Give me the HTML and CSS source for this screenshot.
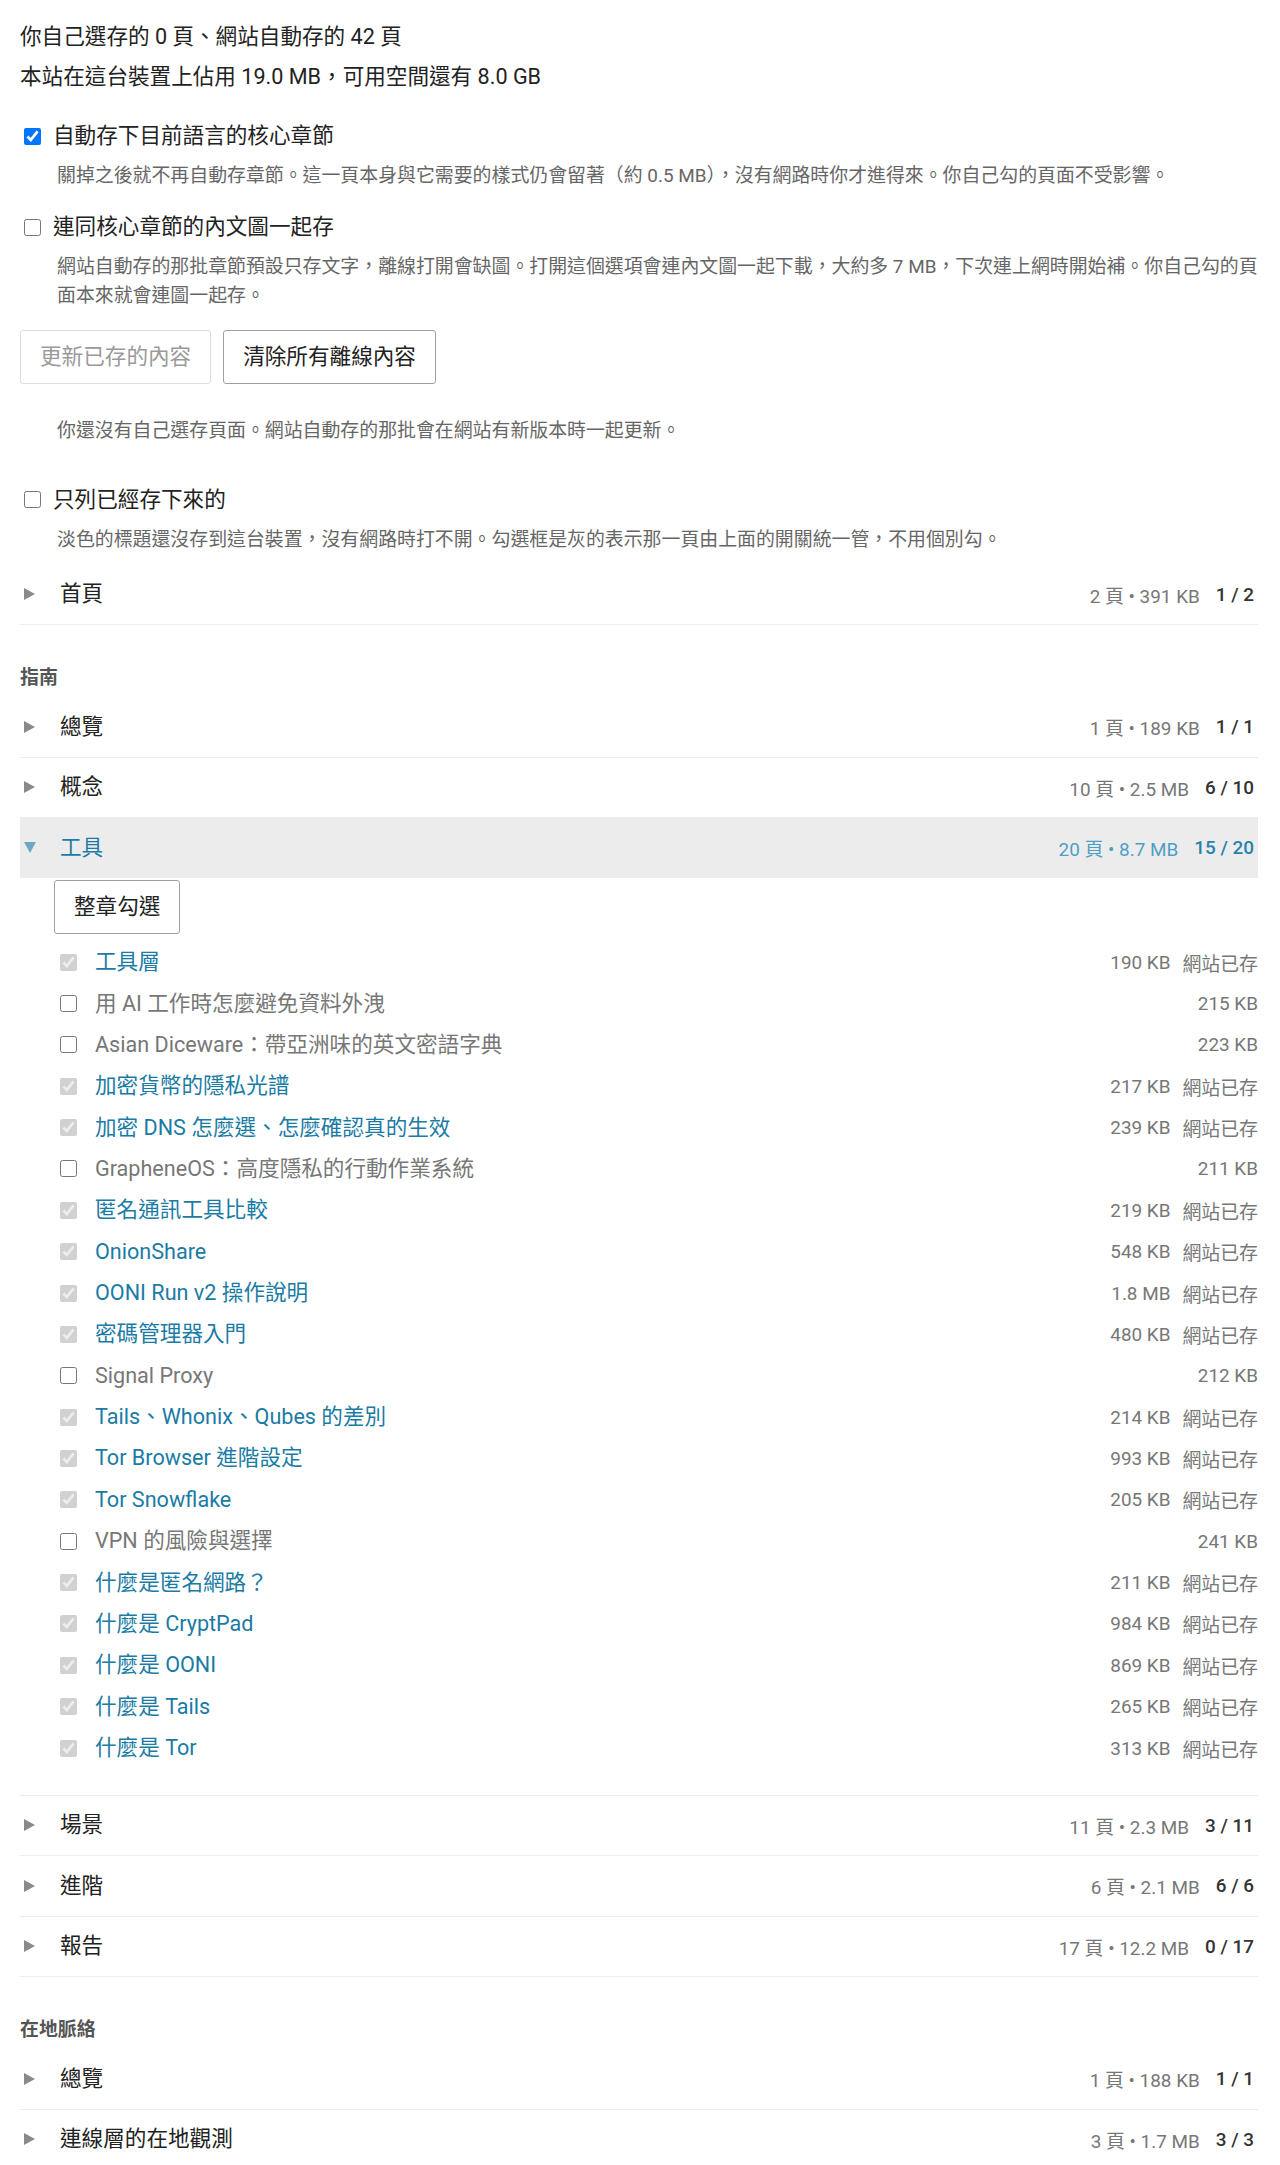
FILE: index.html
```html
<!DOCTYPE html>
<html lang="zh-Hant">
<head>
<meta charset="utf-8">
<title>離線內容</title>
<link rel="stylesheet" href="styles.css">
</head>
<body>
<main class="page">
  <p class="stat">你自己選存的 0 頁、網站自動存的 42 頁</p>
  <p class="stat">本站在這台裝置上佔用 19.0 MB，可用空間還有 8.0 GB</p>

  <div class="opt opt-first">
    <label class="opt-label"><input type="checkbox" checked><span>自動存下目前語言的核心章節</span></label>
    <p class="opt-desc">關掉之後就不再自動存章節。這一頁本身與它需要的樣式仍會留著（約 0.5 MB），沒有網路時你才進得來。你自己勾的頁面不受影響。</p>
  </div>

  <div class="opt">
    <label class="opt-label"><input type="checkbox"><span>連同核心章節的內文圖一起存</span></label>
    <p class="opt-desc">網站自動存的那批章節預設只存文字，離線打開會缺圖。打開這個選項會連內文圖一起下載，大約多 7 MB，下次連上網時開始補。你自己勾的頁面本來就會連圖一起存。</p>
  </div>

  <div class="actions">
    <button class="btn" disabled>更新已存的內容</button>
    <button class="btn">清除所有離線內容</button>
  </div>

  <p class="note">你還沒有自己選存頁面。網站自動存的那批會在網站有新版本時一起更新。</p>

  <div class="opt opt-filter">
    <label class="opt-label"><input type="checkbox"><span>只列已經存下來的</span></label>
    <p class="opt-desc">淡色的標題還沒存到這台裝置，沒有網路時打不開。勾選框是灰的表示那一頁由上面的開關統一管，不用個別勾。</p>
  </div>

  <div class="cats cats-top">
    <div class="cat">
      <div class="cat-row">
        <span class="tri"><svg width="11" height="12" viewBox="0 0 11 12"><path d="M0 0L11 6L0 12Z"/></svg></span>
        <span class="cat-title">首頁</span>
        <span class="cat-meta">2 頁 • 391 KB</span><span class="cat-count">1 / 2</span>
      </div>
    </div>
  </div>

  <section class="group">
    <h2 class="group-title">指南</h2>
    <div class="cat">
      <div class="cat-row">
        <span class="tri"><svg width="11" height="12" viewBox="0 0 11 12"><path d="M0 0L11 6L0 12Z"/></svg></span>
        <span class="cat-title">總覽</span>
        <span class="cat-meta">1 頁 • 189 KB</span><span class="cat-count">1 / 1</span>
      </div>
    </div>
    <div class="cat">
      <div class="cat-row">
        <span class="tri"><svg width="11" height="12" viewBox="0 0 11 12"><path d="M0 0L11 6L0 12Z"/></svg></span>
        <span class="cat-title">概念</span>
        <span class="cat-meta">10 頁 • 2.5 MB</span><span class="cat-count">6 / 10</span>
      </div>
    </div>
    <div class="cat cat-open">
      <div class="cat-row">
        <span class="tri"><svg width="12" height="11" viewBox="0 0 12 11"><path d="M0 0L12 0L6 11Z"/></svg></span>
        <span class="cat-title">工具</span>
        <span class="cat-meta">20 頁 • 8.7 MB</span><span class="cat-count">15 / 20</span>
      </div>
      <div class="panel">
        <button class="btn">整章勾選</button>
        <ul class="pages">
          <li class="page-item"><input type="checkbox" checked disabled><a class="page-title saved" href="#">工具層</a><span class="page-size">190 KB</span><span class="page-status">網站已存</span></li>
          <li class="page-item"><input type="checkbox"><span class="page-title">用 AI 工作時怎麼避免資料外洩</span><span class="page-size">215 KB</span></li>
          <li class="page-item"><input type="checkbox"><span class="page-title">Asian Diceware：帶亞洲味的英文密語字典</span><span class="page-size">223 KB</span></li>
          <li class="page-item"><input type="checkbox" checked disabled><a class="page-title saved" href="#">加密貨幣的隱私光譜</a><span class="page-size">217 KB</span><span class="page-status">網站已存</span></li>
          <li class="page-item"><input type="checkbox" checked disabled><a class="page-title saved" href="#">加密 DNS 怎麼選、怎麼確認真的生效</a><span class="page-size">239 KB</span><span class="page-status">網站已存</span></li>
          <li class="page-item"><input type="checkbox"><span class="page-title">GrapheneOS：高度隱私的行動作業系統</span><span class="page-size">211 KB</span></li>
          <li class="page-item"><input type="checkbox" checked disabled><a class="page-title saved" href="#">匿名通訊工具比較</a><span class="page-size">219 KB</span><span class="page-status">網站已存</span></li>
          <li class="page-item"><input type="checkbox" checked disabled><a class="page-title saved" href="#">OnionShare</a><span class="page-size">548 KB</span><span class="page-status">網站已存</span></li>
          <li class="page-item"><input type="checkbox" checked disabled><a class="page-title saved" href="#">OONI Run v2 操作說明</a><span class="page-size">1.8 MB</span><span class="page-status">網站已存</span></li>
          <li class="page-item"><input type="checkbox" checked disabled><a class="page-title saved" href="#">密碼管理器入門</a><span class="page-size">480 KB</span><span class="page-status">網站已存</span></li>
          <li class="page-item"><input type="checkbox"><span class="page-title">Signal Proxy</span><span class="page-size">212 KB</span></li>
          <li class="page-item"><input type="checkbox" checked disabled><a class="page-title saved" href="#">Tails、Whonix、Qubes 的差別</a><span class="page-size">214 KB</span><span class="page-status">網站已存</span></li>
          <li class="page-item"><input type="checkbox" checked disabled><a class="page-title saved" href="#">Tor Browser 進階設定</a><span class="page-size">993 KB</span><span class="page-status">網站已存</span></li>
          <li class="page-item"><input type="checkbox" checked disabled><a class="page-title saved" href="#">Tor Snowflake</a><span class="page-size">205 KB</span><span class="page-status">網站已存</span></li>
          <li class="page-item"><input type="checkbox"><span class="page-title">VPN 的風險與選擇</span><span class="page-size">241 KB</span></li>
          <li class="page-item"><input type="checkbox" checked disabled><a class="page-title saved" href="#">什麼是匿名網路？</a><span class="page-size">211 KB</span><span class="page-status">網站已存</span></li>
          <li class="page-item"><input type="checkbox" checked disabled><a class="page-title saved" href="#">什麼是 CryptPad</a><span class="page-size">984 KB</span><span class="page-status">網站已存</span></li>
          <li class="page-item"><input type="checkbox" checked disabled><a class="page-title saved" href="#">什麼是 OONI</a><span class="page-size">869 KB</span><span class="page-status">網站已存</span></li>
          <li class="page-item"><input type="checkbox" checked disabled><a class="page-title saved" href="#">什麼是 Tails</a><span class="page-size">265 KB</span><span class="page-status">網站已存</span></li>
          <li class="page-item"><input type="checkbox" checked disabled><a class="page-title saved" href="#">什麼是 Tor</a><span class="page-size">313 KB</span><span class="page-status">網站已存</span></li>
        </ul>
      </div>
    </div>
    <div class="cat">
      <div class="cat-row">
        <span class="tri"><svg width="11" height="12" viewBox="0 0 11 12"><path d="M0 0L11 6L0 12Z"/></svg></span>
        <span class="cat-title">場景</span>
        <span class="cat-meta">11 頁 • 2.3 MB</span><span class="cat-count">3 / 11</span>
      </div>
    </div>
    <div class="cat">
      <div class="cat-row">
        <span class="tri"><svg width="11" height="12" viewBox="0 0 11 12"><path d="M0 0L11 6L0 12Z"/></svg></span>
        <span class="cat-title">進階</span>
        <span class="cat-meta">6 頁 • 2.1 MB</span><span class="cat-count">6 / 6</span>
      </div>
    </div>
    <div class="cat">
      <div class="cat-row">
        <span class="tri"><svg width="11" height="12" viewBox="0 0 11 12"><path d="M0 0L11 6L0 12Z"/></svg></span>
        <span class="cat-title">報告</span>
        <span class="cat-meta">17 頁 • 12.2 MB</span><span class="cat-count">0 / 17</span>
      </div>
    </div>
  </section>

  <section class="group">
    <h2 class="group-title">在地脈絡</h2>
    <div class="cat">
      <div class="cat-row">
        <span class="tri"><svg width="11" height="12" viewBox="0 0 11 12"><path d="M0 0L11 6L0 12Z"/></svg></span>
        <span class="cat-title">總覽</span>
        <span class="cat-meta">1 頁 • 188 KB</span><span class="cat-count">1 / 1</span>
      </div>
    </div>
    <div class="cat">
      <div class="cat-row">
        <span class="tri"><svg width="11" height="12" viewBox="0 0 11 12"><path d="M0 0L11 6L0 12Z"/></svg></span>
        <span class="cat-title">連線層的在地觀測</span>
        <span class="cat-meta">3 頁 • 1.7 MB</span><span class="cat-count">3 / 3</span>
      </div>
    </div>
  </section>
</main>
</body>
</html>
```

FILE: styles.css
```css
html, body {
  margin: 0;
  padding: 0;
  background: #ffffff;
}

body {
  color: #222222;
  font-family: Roboto, "Noto Sans CJK TC", "Noto Sans", sans-serif;
  font-size: 21.6px;
}

.page {
  padding: 20px 22px 0 20px;
}

.stat {
  margin: 0 0 6px;
  line-height: 34px;
}

.opt {
  margin-top: 20px;
}

.opt-first {
  margin-top: 25px;
}

.opt-filter {
  margin-top: 37.5px;
}

.opt-label {
  display: flex;
  align-items: center;
  gap: 12px;
  padding-left: 4px;
  line-height: 34px;
}

.opt-label input {
  width: 17px;
  height: 17px;
  margin: 0;
  flex: none;
}

.opt-desc {
  margin: 8px -8px 0 37px;
  font-size: 18.9px;
  line-height: 29px;
  color: #666666;
}

.actions {
  display: flex;
  gap: 12px;
  margin-top: 20px;
}

.btn {
  font: inherit;
  line-height: 28px;
  padding: 12px 19px;
  border: 1px solid #a0a0a0;
  border-radius: 3px;
  background: #ffffff;
  color: #222222;
}

.btn:disabled {
  color: #9a9a9a;
  border-color: #dddddd;
}

.note {
  margin: 32px 0 0 37px;
  font-size: 18.9px;
  line-height: 29px;
  color: #666666;
}

.cats-top {
  margin-top: 11px;
}

.cat {
  border-bottom: 1px solid #ececec;
}

.cat-row {
  display: flex;
  align-items: center;
  height: 59.5px;
  padding: 0 4px;
}

.tri {
  width: 36px;
  flex: none;
  display: flex;
  align-items: center;
  fill: #8a8a8a;
}

.cat-title {
  flex: 1;
  line-height: 34px;
}

.cat-meta {
  font-size: 18.9px;
  color: #777777;
}

.cat-count {
  font-size: 18.9px;
  font-weight: 500;
  color: #333333;
  margin-left: 16px;
}

.cat-open .cat-row {
  background: #ececec;
}

.cat-open .tri {
  fill: #6aa8c4;
}

.cat-open .cat-title {
  color: #1c7ca6;
}

.cat-open .cat-meta {
  color: #4f9fc5;
}

.cat-open .cat-count {
  color: #2683ae;
}

.group-title {
  margin: 39px 0 5px;
  font-size: 18.9px;
  line-height: 28px;
  font-weight: 600;
  color: #555555;
}

.panel {
  padding: 2px 0 26px 34px;
}

.pages {
  list-style: none;
  margin: 8px 0 0;
  padding: 0 0 0 6px;
}

.page-item {
  display: flex;
  align-items: center;
  height: 41.36px;
}

.page-item input {
  width: 17px;
  height: 17px;
  margin: 0 18px 0 0;
  flex: none;
}

.page-title {
  flex: 1;
  color: #777777;
  line-height: 34px;
}

a.page-title {
  color: #1a7ba5;
  text-decoration: none;
}

.page-size {
  font-size: 18.9px;
  color: #777777;
}

.page-status {
  font-size: 18.9px;
  color: #777777;
  margin-left: 12px;
}
```
